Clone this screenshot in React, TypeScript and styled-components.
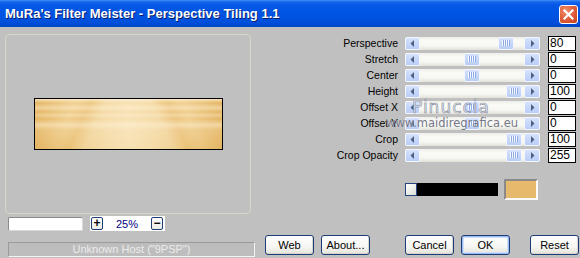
import React from "react";
import { styled, createGlobalStyle } from "styled-components";

const GlobalStyle = createGlobalStyle`
  html, body {
    margin: 0;
    padding: 0;
    background: #c0c0c0;
  }
  body {
    font-family: "Liberation Sans", Arial, sans-serif;
  }
`;

type Param = { label: string; value: number; min: number; max: number };

const params: Param[] = [
  { label: "Perspective", value: 80, min: -100, max: 100 },
  { label: "Stretch", value: 0, min: -100, max: 100 },
  { label: "Center", value: 0, min: -100, max: 100 },
  { label: "Height", value: 100, min: -100, max: 100 },
  { label: "Offset X", value: 0, min: -100, max: 100 },
  { label: "Offset Y", value: 0, min: -100, max: 100 },
  { label: "Crop", value: 100, min: -100, max: 100 },
  { label: "Crop Opacity", value: 255, min: 0, max: 255 },
];

const THUMB_MIN = 17;
const THUMB_MAX = 101;

const Arrow = ({ dir }: { dir: "left" | "right" }) => (
  <svg width="5" height="7" viewBox="0 0 5 7">
    {dir === "left" ? (
      <path d="M4 0 L0.5 3.5 L4 7 Z" fill="#4d6185" />
    ) : (
      <path d="M1 0 L4.5 3.5 L1 7 Z" fill="#4d6185" />
    )}
  </svg>
);

const Slider = ({ p }: { p: Param }) => {
  const pos = THUMB_MIN + ((p.value - p.min) / (p.max - p.min)) * (THUMB_MAX - THUMB_MIN);
  return (
    <SliderTrack>
      <ArrowButton>
        <Arrow dir="left" />
      </ArrowButton>
      <ArrowButton $right>
        <Arrow dir="right" />
      </ArrowButton>
      <Thumb style={{ left: pos }}>
        <Grip />
      </Thumb>
    </SliderTrack>
  );
};

const App = () => {
  return (
    <Window>
      <GlobalStyle />
      <TitleBar>
        <Title>{`MuRa's Filter Meister - Perspective Tiling 1.1`}</Title>
        <CloseButton>
          <svg width="11" height="11" viewBox="0 0 11 11">
            <path d="M1.5 1.5 L9.5 9.5 M9.5 1.5 L1.5 9.5" stroke="#fff" strokeWidth="2.2" strokeLinecap="square" />
          </svg>
        </CloseButton>
      </TitleBar>
      <Body>
        <LeftColumn>
          <PreviewGroup>
            <PreviewImage />
          </PreviewGroup>
          <ZoomRow>
            <ZoomField />
            <ZoomControls>
              <SmallButton>+</SmallButton>
              <ZoomValue>25%</ZoomValue>
              <SmallButton>−</SmallButton>
            </ZoomControls>
          </ZoomRow>
          <StatusBar>{`Unknown Host ("9PSP")`}</StatusBar>
        </LeftColumn>
        <RightColumn>
          <ParamList>
            {params.map((p) => (
              <ParamRow key={p.label}>
                <ParamLabel>{p.label}</ParamLabel>
                <Slider p={p} />
                <ValueBox>{p.value}</ValueBox>
              </ParamRow>
            ))}
          </ParamList>
          <ColorRow>
            <ColorStrip>
              <ColorMarker />
              <BlackBar />
            </ColorStrip>
            <Swatch />
          </ColorRow>
          <ButtonRow>
            <DialogButton>Web</DialogButton>
            <DialogButton>About...</DialogButton>
            <DialogButton $gapLeft={35}>Cancel</DialogButton>
            <DialogButton $default>OK</DialogButton>
            <DialogButton $gapLeft={20}>Reset</DialogButton>
          </ButtonRow>
        </RightColumn>
      </Body>
      <WatermarkName>Pinuccia</WatermarkName>
      <WatermarkSite>www.maidiregrafica.eu</WatermarkSite>
    </Window>
  );
};

const Window = styled.div`
  position: relative;
  width: 580px;
  height: 258px;
  background: #c0c0c0;
  overflow: hidden;
`;

const TitleBar = styled.div`
  height: 27px;
  display: flex;
  align-items: center;
  justify-content: space-between;
  padding: 0 2px 0 5px;
  box-sizing: border-box;
  background: linear-gradient(
    to bottom,
    #3d8ff7 0px,
    #1566ec 2px,
    #0558e6 5px,
    #0054e3 14px,
    #0050dc 22px,
    #0046c6 27px
  );
`;

const Title = styled.span`
  color: #fff;
  font-family: "Liberation Sans", Arial, sans-serif;
  font-weight: bold;
  font-size: 13px;
  text-shadow: 1px 1px 0 #0a1e6c;
  white-space: nowrap;
`;

const CloseButton = styled.div`
  width: 19px;
  height: 19px;
  box-sizing: border-box;
  border: 1px solid #fff;
  border-radius: 3px;
  background: radial-gradient(circle at 35% 30%, #f09070 0%, #e2623e 45%, #c8401e 100%);
  display: flex;
  align-items: center;
  justify-content: center;
  margin-top: 1px;
`;

const Body = styled.div`
  display: flex;
  height: 231px;
`;

const LeftColumn = styled.div`
  width: 258px;
  display: flex;
  flex-direction: column;
  padding-top: 7px;
  box-sizing: border-box;
`;

const PreviewGroup = styled.div`
  margin-left: 5px;
  width: 246px;
  height: 180px;
  box-sizing: border-box;
  border: 1px solid #d6d6ca;
  border-radius: 4px;
  display: flex;
  align-items: center;
  justify-content: center;
`;

const PreviewImage = styled.div`
  width: 189px;
  height: 52px;
  box-sizing: border-box;
  border: 1px solid #000;
  background:
    linear-gradient(
      to bottom,
      rgba(255, 244, 220, 0.7) 0%,
      rgba(255, 244, 220, 0) 8%,
      rgba(255, 244, 220, 0.45) 18%,
      rgba(255, 244, 220, 0) 26%,
      rgba(255, 244, 220, 0.35) 32%,
      rgba(255, 244, 220, 0) 40%,
      rgba(255, 244, 220, 0.5) 52%,
      rgba(255, 244, 220, 0.15) 62%,
      rgba(255, 244, 220, 0) 100%
    ),
    linear-gradient(
      115deg,
      transparent 20%,
      rgba(225, 170, 80, 0.35) 27%,
      transparent 34%
    ),
    linear-gradient(
      65deg,
      transparent 66%,
      rgba(225, 170, 80, 0.35) 73%,
      transparent 80%
    ),
    linear-gradient(
      to right,
      #e4b462 0%,
      #efcd8c 18%,
      #f5dcaa 40%,
      #f7e1b4 50%,
      #f5dcaa 60%,
      #efcd8c 82%,
      #e4b462 100%
    );
`;

const ZoomRow = styled.div`
  display: flex;
  align-items: center;
  margin-top: 2px;
  padding-left: 8px;
  height: 15px;
`;

const ZoomField = styled.div`
  width: 75px;
  height: 14px;
  box-sizing: border-box;
  background: #fff;
  border: 1px solid #8a8a8a;
  border-right-color: #d8d8d8;
  border-bottom-color: #d8d8d8;
  border-radius: 2px;
`;

const ZoomControls = styled.div`
  display: flex;
  align-items: center;
  margin-left: 7px;
  width: 75px;
  height: 15px;
  background: #fff;
  padding-left: 1px;
  box-sizing: border-box;
`;

const SmallButton = styled.div`
  width: 12px;
  height: 13px;
  box-sizing: border-box;
  border: 1px solid #1c3d78;
  border-radius: 2px;
  background: linear-gradient(#ffffff, #ecebe4);
  color: #000;
  font-size: 12px;
  font-weight: bold;
  line-height: 10px;
  text-align: center;
`;

const ZoomValue = styled.span`
  width: 48px;
  text-align: center;
  color: #000080;
  font-size: 11px;
`;

const StatusBar = styled.div`
  margin-top: 11px;
  margin-left: 8px;
  width: 247px;
  height: 15px;
  box-sizing: border-box;
  border: 1px solid #9a9a9a;
  border-right-color: #f4f4f4;
  border-bottom-color: #f4f4f4;
  background: #bdbdbd;
  color: #ececec;
  font-size: 11px;
  line-height: 13px;
  text-align: center;
`;

const RightColumn = styled.div`
  flex: 1;
  display: flex;
  flex-direction: column;
  padding-top: 8px;
`;

const ParamList = styled.div`
  display: flex;
  flex-direction: column;
`;

const ParamRow = styled.div`
  display: grid;
  grid-template-columns: 140px 135px 29px;
  column-gap: 7px;
  align-items: center;
  height: 16px;
`;

const ParamLabel = styled.span`
  text-align: right;
  font-size: 10.5px;
  color: #000;
  white-space: nowrap;
`;

const SliderTrack = styled.div`
  position: relative;
  height: 13px;
  border-radius: 2px;
  background: linear-gradient(to bottom, #eeeee8 0%, #fbfbf8 30%, #f6f6f2 70%, #e2e2da 100%);
`;

const ArrowButton = styled.div<{ $right?: boolean }>`
  position: absolute;
  top: 0;
  ${({ $right }) => ($right ? "right: 0; width: 16px;" : "left: 0; width: 15px;")}
  height: 13px;
  box-sizing: border-box;
  border: 1px solid #f4f7fe;
  border-radius: 2px;
  background: linear-gradient(to bottom, #d6e2fd, #b9cdf7);
  display: flex;
  align-items: center;
  justify-content: center;
`;

const Thumb = styled.div`
  position: absolute;
  top: 0;
  width: 16px;
  height: 13px;
  box-sizing: border-box;
  border: 1px solid #f4f7fe;
  border-radius: 2px;
  background: linear-gradient(to bottom, #d6e2fd, #b9cdf7);
  display: flex;
  align-items: center;
  justify-content: center;
`;

const Grip = styled.div`
  width: 8px;
  height: 6px;
  background: repeating-linear-gradient(to right, #f6f9ff 0 1px, #8eaae8 1px 2px);
`;

const ValueBox = styled.div`
  margin-left: 1px;
  height: 15px;
  box-sizing: border-box;
  border: 1px solid #000;
  background: #fff;
  font-size: 12px;
  line-height: 13px;
  padding-left: 1px;
  color: #000;
`;

const ColorRow = styled.div`
  display: flex;
  align-items: center;
  margin-top: 16px;
  padding-left: 147px;
  height: 21px;
`;

const ColorStrip = styled.div`
  display: flex;
  height: 13px;
`;

const ColorMarker = styled.div`
  width: 12px;
  height: 13px;
  box-sizing: border-box;
  border: 1px solid #24467c;
  background: linear-gradient(135deg, #ffffff, #dcdcd6);
`;

const BlackBar = styled.div`
  width: 81px;
  background: #000;
`;

const Swatch = styled.div`
  margin-left: 6px;
  width: 34px;
  height: 21px;
  box-sizing: border-box;
  border: 2px solid #8a8a8a;
  border-right-color: #fafafa;
  border-bottom-color: #fafafa;
  background: #e6b96c;
`;

const ButtonRow = styled.div`
  display: flex;
  gap: 7px;
  margin-top: 35px;
  padding-left: 7px;
`;

const DialogButton = styled.div<{ $default?: boolean; $gapLeft?: number }>`
  width: 49px;
  height: 20px;
  box-sizing: border-box;
  margin-left: ${({ $gapLeft }) => ($gapLeft ? `${$gapLeft - 7}px` : "0")};
  border: 1px solid #1c3d78;
  border-radius: 3px;
  background: linear-gradient(to bottom, #ffffff 0%, #f6f6f2 60%, #e4e3da 100%);
  box-shadow: ${({ $default }) =>
    $default ? "inset 0 0 0 1px #9cbbf2, inset 0 0 0 2px #cfdffb" : "inset -1px -1px 0 #d6d5cc"};
  font-size: 11px;
  color: #000;
  display: flex;
  align-items: center;
  justify-content: center;
`;

const WatermarkName = styled.div`
  position: absolute;
  left: 412px;
  top: 97px;
  font-family: "DejaVu Sans", sans-serif;
  font-size: 17px;
  letter-spacing: 1px;
  color: rgba(225, 230, 240, 0.85);
  -webkit-text-stroke: 0.6px #8a90a2;
  pointer-events: none;
`;

const WatermarkSite = styled.div`
  position: absolute;
  left: 386px;
  top: 116px;
  font-family: "DejaVu Sans", sans-serif;
  font-size: 11.5px;
  color: rgba(95, 100, 115, 0.85);
  text-shadow: 0 0 1px #e8e8f0;
  pointer-events: none;
`;

export default App;
